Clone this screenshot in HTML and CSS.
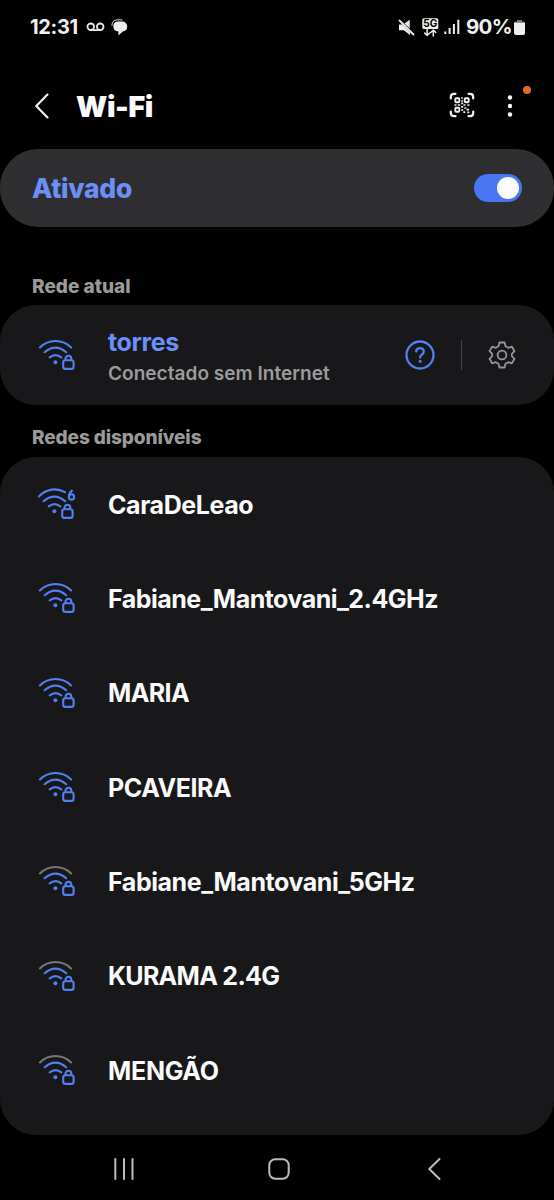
FILE: index.html
```html
<!DOCTYPE html>
<html lang="pt-BR">
<head>
<meta charset="utf-8">
<title>Wi-Fi</title>
<link rel="stylesheet" href="styles.css">
</head>
<body>
<svg class="defs" width="0" height="0" aria-hidden="true">
  <symbol id="wifi-inner" viewBox="0 0 38 32">
    <path d="M6.600 13.200Q17.500 4 28.200 13.200M11.700 18.300Q17.500 13.800 23.300 18.300"/>
    <circle class="dot" cx="17.400" cy="23.300" r="2"/>
    <rect x="25.200" y="21.200" width="10.400" height="8.700" rx="2.200"/>
    <path d="M27.500 20.800v-1.100a2.900 2.900 0 0 1 5.800 0v1.100"/>
  </symbol>
  <symbol id="wifi" viewBox="0 0 38 32">
    <path class="outer" d="M1.900 8.400C10.500-.2 24.500-.2 33.100 8.400"/>
    <use href="#wifi-inner"/>
  </symbol>
</svg>

<header class="status">
  <span class="clock">12:31</span>
  <svg class="voicemail" width="19" height="12" viewBox="0 0 19 12"><circle cx="4.800" cy="5.800" r="3.300"/><circle cx="14.200" cy="5.800" r="3.300"/><path d="M4.800 9.100h9.400"/></svg>
  <svg class="chat" width="17" height="17" viewBox="0 0 17 17"><path d="M6.500 2.500H11.200a5 5 0 0 1 5 5 5 5 0 0 1-4.500 5L7.400 16.400v-3.800Q2.300 12 2.300 7.300 2.300 3 6.500 2.500z"/><path class="tail" d="M.9 6.300Q1.200 1 6.500.9H11"/></svg>
  <span class="fill"></span>
  <svg class="mute" width="17" height="17" viewBox="0 0 17 17"><path d="M1 5.500h3.300L12 13.400V16L5.800 11.300H1zM6.500 4.500L11.700.8v8.700z"/><path class="slash" d="M1.500 1.500l14 14"/></svg>
  <svg class="fiveg" width="17" height="19" viewBox="0 0 17 19"><rect x=".3" y=".2" width="16" height="10.800" rx="1.500"/><text x="8.300" y="9.200" text-anchor="middle">5G</text><path d="M5.100 11.500v6M2.600 15l2.500 2.500L7.600 15M11.300 18v-6M8.800 14.500l2.500-2.500 2.500 2.500"/></svg>
  <svg class="signal" width="16" height="16" viewBox="0 0 16 16"><path d="M1.300 12.500V15M5.600 9V15M9.900 5V15M14.300.8V15"/></svg>
  <span class="percent">90%</span>
  <svg class="battery" width="11" height="15" viewBox="0 0 11 15"><path class="empty" d="M3 0h5v1.500h1.500Q11 1.500 11 3.300H0Q0 1.500 1.500 1.500H3z"/><path d="M0 2.800h11V13q0 2-2 2H2q-2 0-2-2z"/></svg>
</header>

<div class="titlebar">
  <svg class="back" width="14" height="26" viewBox="0 0 14 26"><path d="M12.500 1.500L1.300 13l11.200 11.500"/></svg>
  <h1>Wi-Fi</h1>
  <svg class="qr" width="26" height="26" viewBox="0 0 26 26">
    <path class="frame" d="M1.800 6.500V5q0-3.200 3.200-3.200h1.500M19.500 1.800H21q3.200 0 3.200 3.200v1.500M24.200 19.500V21q0 3.200-3.200 3.200h-1.500M6.500 24.200H5q-3.200 0-3.200-3.200v-1.500"/>
    <rect x="6.300" y="6.300" width="4" height="4" rx="1"/><rect x="15.700" y="6.300" width="4" height="4" rx="1"/><rect x="6.300" y="15.700" width="4" height="4" rx="1"/>
    <path class="bits" d="M12.200 6h1.700M12.200 9h1.700M5.500 13h2M8.800 13h2.400M12.200 11.300h2M14.500 13h2M18.300 13h2.200M12.200 14.800h2M15.300 16h2M12.200 18h2M14.300 20.200h2M17.500 17.700h2.500M18.300 20.300h2"/>
  </svg>
  <div class="more">
    <svg width="6" height="24" viewBox="0 0 6 24"><circle cx="3" cy="3.500" r="2.200"/><circle cx="3" cy="12" r="2.200"/><circle cx="3" cy="20.500" r="2.200"/></svg>
    <span class="badge"></span>
  </div>
</div>

<main>
  <section class="card master">
    <span class="state">Ativado</span>
    <span class="toggle"><span class="knob"></span></span>
  </section>

  <h2 class="first">Rede atual</h2>
  <section class="card current">
    <svg class="wifi" width="38" height="32"><use href="#wifi"/></svg>
    <div class="info">
      <span class="name linked">torres</span>
      <span class="detail">Conectado sem Internet</span>
    </div>
    <svg class="help" width="30" height="30" viewBox="0 0 30 30"><circle cx="15" cy="15" r="13.500"/><path d="M11.200 11.600c.1-4.600 7.600-4.600 7.600-.1 0 3-3.700 3.200-3.700 5.900"/><circle class="dot" cx="15.100" cy="21.200" r="1.500"/></svg>
    <span class="divider"></span>
    <svg class="gear" width="28" height="28" viewBox="0 0 28 28"><path d="M11.400 1.500h5.200l.9 3.700 2.700 1.600 3.700-1.100 2.600 4.500-2.700 2.600v2.400l2.700 2.600-2.600 4.500-3.700-1.100-2.700 1.600-.9 3.700h-5.200l-.9-3.700-2.700-1.600-3.700 1.100-2.600-4.500 2.700-2.600v-2.400L1.500 10.200l2.600-4.500 3.700 1.100 2.700-1.600z"/><circle cx="14" cy="14" r="4.400"/></svg>
  </section>

  <h2 class="second">Redes disponíveis</h2>
  <ul class="card list">
    <li class="row six"><svg class="wifi" width="38" height="32" viewBox="0 0 38 32"><path d="M1.900 8.400C9.500.8 19.500-.7 28 4.200"/><use href="#wifi-inner"/><path d="M34.900 2.600Q32 5 31.900 8.600"/><ellipse cx="34.500" cy="8.900" rx="2.600" ry="2.700"/></svg><span class="name n1">CaraDeLeao</span></li>
    <li class="row"><svg class="wifi" width="38" height="32"><use href="#wifi"/></svg><span class="name n2">Fabiane_Mantovani_2.4GHz</span></li>
    <li class="row"><svg class="wifi" width="38" height="32"><use href="#wifi"/></svg><span class="name n3">MARIA</span></li>
    <li class="row"><svg class="wifi" width="38" height="32"><use href="#wifi"/></svg><span class="name n4">PCAVEIRA</span></li>
    <li class="row weak"><svg class="wifi" width="38" height="32"><use href="#wifi"/></svg><span class="name n5">Fabiane_Mantovani_5GHz</span></li>
    <li class="row weak"><svg class="wifi" width="38" height="32"><use href="#wifi"/></svg><span class="name n6">KURAMA 2.4G</span></li>
    <li class="row weak"><svg class="wifi" width="38" height="32"><use href="#wifi"/></svg><span class="name n7">MENGÃO</span></li>
  </ul>
</main>

<nav class="navbar">
  <svg width="22" height="22" viewBox="0 0 22 22"><path d="M2.300 1v20M11 1v20M19.500 1v20"/></svg>
  <svg width="22" height="22" viewBox="0 0 22 22"><rect x="1.300" y="1.300" width="19.400" height="19.400" rx="6"/></svg>
  <svg width="22" height="22" viewBox="0 0 22 22"><path d="M16.500 1L6.300 11l10.200 10"/></svg>
</nav>
</body>
</html>
```
FILE: styles.css
```css
* { box-sizing: border-box; }
body {
  margin: 0;
  width: 554px;
  height: 1200px;
  overflow: hidden;
  background: #000;
  color: #fafafa;
  font-family: Inter, Roboto, sans-serif;
}
svg { flex: none; display: block; fill: none; stroke-linecap: round; stroke-linejoin: round; }
.defs { position: absolute; }
.fill { flex: 1; }

.status {
  height: 54px;
  padding: 0 29px 0 30px;
  display: flex;
  align-items: center;
  font-size: 20px;
  font-weight: 700;
  line-height: 24px;
  color: #f0f0f0;
}
.clock { width: 56px; white-space: nowrap; letter-spacing: -0.3px; }
.voicemail { stroke: #e8e8e8; stroke-width: 1.8; }
.chat { margin-left: 6px; fill: #eee; }
.chat .tail { fill: none; stroke: #ddd; stroke-width: 1; }
.mute { fill: #eee; }
.mute .slash { stroke: #eee; stroke-width: 1.8; }
.fiveg { margin-left: 7px; stroke: #eee; stroke-width: 1.5; }
.fiveg rect { fill: #eee; stroke: none; }
.fiveg text { fill: #000; stroke: none; font: 700 10px Inter, sans-serif; }
.signal { margin: 0 6px 0 5px; stroke: #eee; stroke-width: 2; stroke-linecap: butt; }
.percent { width: 48px; font-size: 20.500px; letter-spacing: -0.7px; white-space: nowrap; }
.battery { fill: #eee; }
.battery .empty { fill: #777; }

.titlebar {
  height: 95px;
  padding: 8px 41px 0 35px;
  display: flex;
  align-items: center;
}
.back { stroke: #f5f5f5; stroke-width: 2.1; }
h1 { margin: 2px 0 0 27px; flex: 1; font-size: 29px; line-height: 36px; font-weight: 900; letter-spacing: -0.5px; }
.qr { stroke: #f2f2f2; stroke-width: 1.9; margin-bottom: 1px; }
.qr .frame { stroke-width: 2.2; }
.qr .bits { stroke-width: 1.7; stroke-linecap: butt; }
.more { position: relative; margin-left: 32px; }
.more svg { fill: #fafafa; }
.badge { position: absolute; left: 16px; top: -8px; width: 8px; height: 8px; border-radius: 50%; background: #e36a2e; }

.card { background: #18181a; border-radius: 36px; display: flex; }
.master { height: 78px; background: #2e2e30; border-radius: 38px; padding: 0 32px 0 32px; align-items: center; justify-content: space-between; }
.state { color: #6a90f8; font-size: 26.500px; line-height: 34px; font-weight: 800; letter-spacing: -0.3px; }
.toggle { width: 48px; height: 28px; padding: 3px; border-radius: 14px; background: #4876f4; display: flex; justify-content: flex-end; }
.knob { width: 22px; height: 22px; border-radius: 50%; background: #fcfcfc; }

h2 { margin: 0; padding-left: 32px; color: #9a9a9b; font-size: 19px; line-height: 24px; font-weight: 800; }
.first { padding-top: 48px; height: 78px; }
.second { padding-top: 21px; height: 52px; letter-spacing: -0.1px; }

.current { height: 100px; padding: 0 38px 0 38px; align-items: center; }
.wifi { stroke: #5180f4; stroke-width: 2.1; overflow: visible; }
.dot { fill: #5180f4; stroke: none; }
.info { flex: 1; display: flex; flex-direction: column; margin-left: 32px; padding-top: 5px; white-space: nowrap; }
.name { font-size: 25px; line-height: 32px; font-weight: 700; white-space: nowrap; }
.linked { color: #6a90f8; letter-spacing: -0.35px; }
.detail { color: #9b9b9d; font-size: 19px; line-height: 31px; font-weight: 600; letter-spacing: 0.04px; }
.help { stroke: #5180f4; stroke-width: 2.3; }
.divider { width: 1px; height: 30px; margin: 0 26px 0 26px; background: #454547; }
.gear { stroke: #959597; stroke-width: 1.8; }

.list { margin: 0; padding: 0 0 18px; list-style: none; flex-direction: column; height: 678.300px; }
.row { height: 94.330px; padding-left: 38px; display: flex; align-items: center; }
.row .name { margin-left: 32px; padding-top: 1px; }
.n1 { letter-spacing: -0.42px; }
.n2 { letter-spacing: -0.52px; }
.n3 { letter-spacing: -0.6px; }
.n4 { letter-spacing: -0.42px; }
.n5 { letter-spacing: -0.44px; }
.n6 { letter-spacing: -0.7px; }
.n7 { letter-spacing: -0.3px; }
.weak { --outer: #77777a; }
.outer { stroke: var(--outer, #5180f4); }
.six .wifi { margin-left: -1px; margin-right: 1px; }

.navbar { height: 65px; padding: 2px 109px 0 113px; display: flex; align-items: center; justify-content: space-between; stroke: #bcbcbc; stroke-width: 2; }
```
